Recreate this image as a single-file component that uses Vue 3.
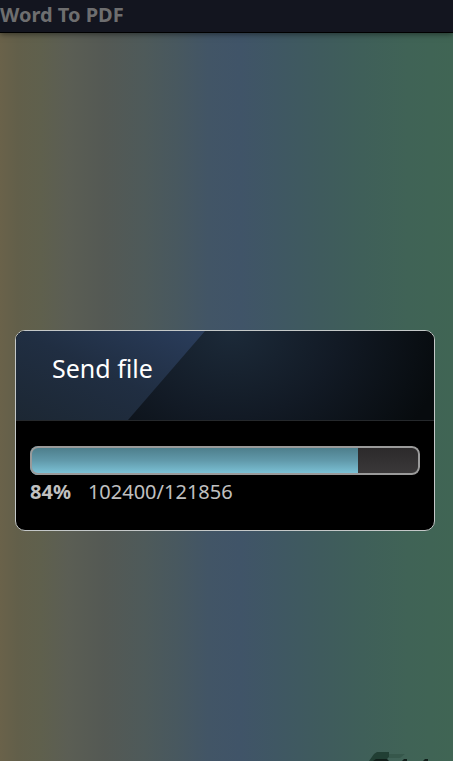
<script setup>
import { computed } from 'vue'

const sent = 102400
const total = 121856
const percent = computed(() => Math.round((sent / total) * 100))
</script>

<template>
  <div class="screen">
    <header class="title-bar">
      <h1>Word To PDF</h1>
    </header>
    <main class="content">
      <section class="dialog" role="dialog" aria-labelledby="dialog-title">
        <div class="dialog-header">
          <svg class="sheen" viewBox="0 0 418 89" preserveAspectRatio="none" aria-hidden="true">
            <defs>
              <linearGradient id="facet" x1="0" y1="1" x2="1" y2="0">
                <stop offset="0" stop-color="#1c2733" />
                <stop offset="0.5" stop-color="#202e42" />
                <stop offset="1" stop-color="#2a3d5c" />
              </linearGradient>
              <radialGradient id="glow" gradientUnits="userSpaceOnUse" cx="215" cy="0" r="215" gradientTransform="scale(1 0.8)">
                <stop offset="0" stop-color="#1c2a39" />
                <stop offset="0.5" stop-color="#121a25" />
                <stop offset="1" stop-color="#070b0e" />
              </radialGradient>
            </defs>
            <rect width="418" height="89" fill="url(#glow)" />
            <path d="M0 0H189L112 89H0Z" fill="url(#facet)" />
          </svg>
          <h2 id="dialog-title">Send file</h2>
        </div>
        <div class="dialog-body">
          <div class="track">
            <progress id="transfer" class="bar" :value="percent" max="100" aria-labelledby="transfer-label"></progress>
          </div>
          <label id="transfer-label" class="status" for="transfer">
            <strong>{{ percent }}%</strong>
            <span>{{ sent }}/{{ total }}</span>
          </label>
        </div>
      </section>
    </main>
    <svg class="emblem" viewBox="0 0 84 9" width="84" height="9" aria-hidden="true">
      <path d="M0 9L5 2L8 0H20V5L16 9Z" fill="#213f34" />
      <path d="M20 2H36L31 6H20Z" fill="#36574b" />
      <path d="M4 9L7 7H18L20 9ZM33 9L35 7H38V9ZM54 9L56 7H59V9Z" fill="#101f1a" />
    </svg>
  </div>
</template>

<style>
body {
  margin: 0;
}
</style>

<style scoped>
.screen {
  display: flex;
  flex-direction: column;
  min-height: 100vh;
  font-family: "Noto Sans", "Open Sans", sans-serif;
  background: linear-gradient(
    90deg,
    #6a624a 0%,
    #625f4a 4%,
    #5f604d 9%,
    #5b5e54 15%,
    #545954 23%,
    #4e5a5a 32%,
    #48585f 39%,
    #425566 46%,
    #405468 53%,
    #3f5763 61%,
    #3f5b5d 71%,
    #3f5f59 80%,
    #406356 90%,
    #406554 100%
  );
}

.title-bar {
  box-sizing: border-box;
  height: 33px;
  border-bottom: 1px solid #000;
  background: #13151f;
  box-shadow: 0 1px 6px rgba(0, 0, 0, 0.5);
}

h1 {
  margin: 0;
  color: #6e6e6f;
  font-size: 20px;
  font-weight: 700;
  line-height: 30px;
}

.content {
  display: flex;
  flex: 1;
  align-items: center;
  padding: 75px 18px 0 15px;
}

.dialog {
  flex: 1;
  overflow: hidden;
  border: 1px solid #c4c8c8;
  border-radius: 10px;
  background: #000;
}

.dialog-header {
  display: grid;
  border-bottom: 1px solid #25282b;
}

.sheen,
h2 {
  grid-area: 1 / 1;
}

.sheen {
  display: block;
  width: 100%;
  height: 89px;
}

h2 {
  z-index: 1;
  margin: 0;
  padding: 19px 36px;
  color: #fff;
  font-size: 25px;
  font-weight: 400;
  line-height: 36px;
}

.dialog-body {
  display: flex;
  flex-direction: column;
  gap: 4px;
  padding: 25px 14px;
}

.track {
  position: relative;
  overflow: hidden;
  border-radius: 8px;
}

.track::after {
  position: absolute;
  inset: 0;
  border: 2px solid #9a9a9a;
  border-radius: 8px;
  content: "";
}

.bar {
  display: block;
  width: 100%;
  height: 29px;
  border: 0;
  background: #333132;
  appearance: none;
}

.bar::-webkit-progress-bar {
  background: linear-gradient(#2b292a, #3b393a);
}

.bar::-webkit-progress-value {
  background: linear-gradient(#4a7a87, #6199aa 50%, #7fc7dc);
}

.status {
  display: flex;
  gap: 17px;
  color: #c0c0c0;
  font-size: 20px;
  line-height: 26px;
}

.emblem {
  align-self: flex-end;
  display: block;
}
</style>
